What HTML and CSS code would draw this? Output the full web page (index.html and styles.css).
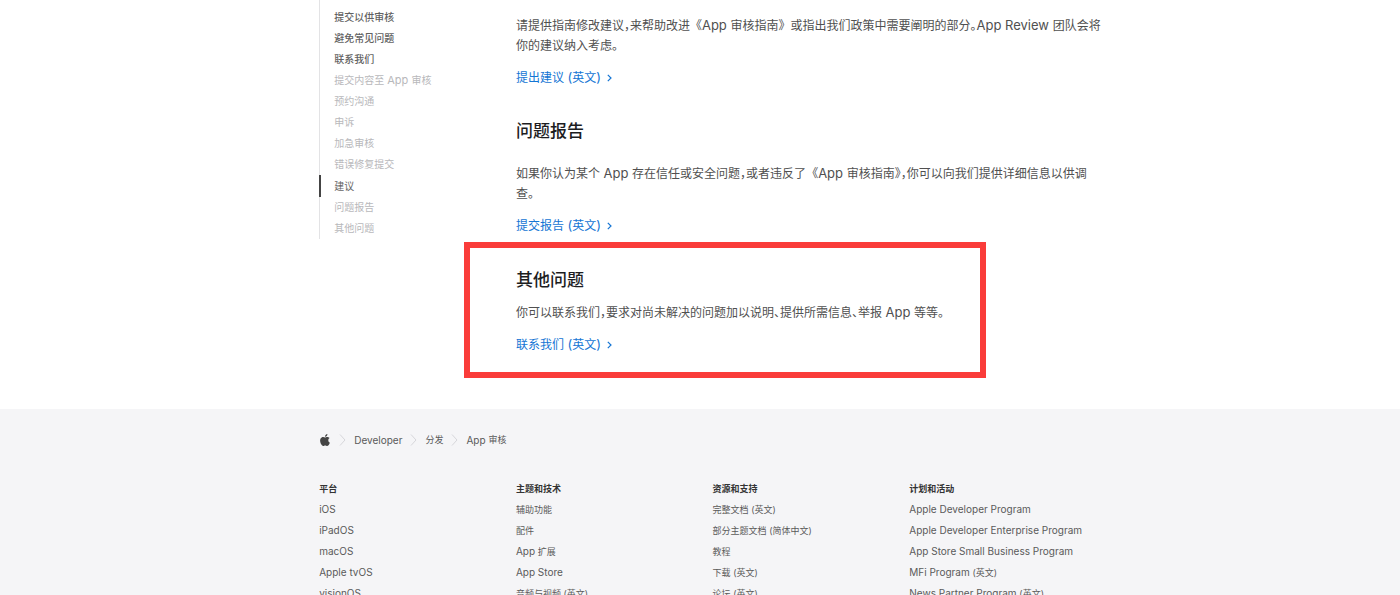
FILE: index.html
```html
<!DOCTYPE html>
<html lang="zh-CN">
<head>
    <meta charset="UTF-8">
    <meta name="viewport" content="width=device-width, initial-scale=1.0">
    <title>App 审核 - Apple Developer</title>
    <link rel="stylesheet" href="styles.css">
</head>
<body>
    <div class="page container">
        <nav class="side-nav" aria-label="本页内容">
            <ul>
                <li class="section"><a href="#submit">提交以供审核</a></li>
                <li class="section"><a href="#avoid">避免常见问题</a></li>
                <li class="section"><a href="#contact">联系我们</a></li>
                <li><a href="#content">提交内容至<span class="latin"> App </span>审核</a></li>
                <li><a href="#appointment">预约沟通</a></li>
                <li><a href="#appeal">申诉</a></li>
                <li><a href="#expedite">加急审核</a></li>
                <li><a href="#bugfix">错误修复提交</a></li>
                <li class="active"><a href="#suggest">建议</a></li>
                <li><a href="#report">问题报告</a></li>
                <li><a href="#other">其他问题</a></li>
            </ul>
        </nav>
        <main class="content">
            <section id="suggest">
                <p>请提供指南修改建议，来帮助改进<span class="bracket">《</span><span class="latin">App </span>审核指南<span class="bracket">》</span>或指出我们政策中需要阐明的部分。<span class="latin">App Review </span>团队会将<br>你的建议纳入考虑。</p>
                <a class="more" href="#suggest"><span>提出建议<span class="latin"> (</span>英文<span class="latin">)</span></span><svg viewBox="0 0 5 8"><path d="M0.8 0.8 4 4 0.8 7.2"/></svg></a>
            </section>
            <section id="report">
                <h2>问题报告</h2>
                <p>如果你认为某个<span class="latin"> App </span>存在信任或安全问题，或者违反了<span class="bracket">《</span><span class="latin">App </span>审核指南<span class="bracket">》</span>，你可以向我们提供详细信息以供调<br>查。</p>
                <a class="more" href="#report"><span>提交报告<span class="latin"> (</span>英文<span class="latin">)</span></span><svg viewBox="0 0 5 8"><path d="M0.8 0.8 4 4 0.8 7.2"/></svg></a>
            </section>
            <section id="other" class="highlight">
                <h2>其他问题</h2>
                <p>你可以联系我们，要求对尚未解决的问题加以说明、提供所需信息、举报<span class="latin"> App </span>等等。</p>
                <a class="more" href="#other"><span>联系我们<span class="latin"> (</span>英文<span class="latin">)</span></span><svg viewBox="0 0 5 8"><path d="M0.8 0.8 4 4 0.8 7.2"/></svg></a>
            </section>
        </main>
    </div>
    <footer class="footer">
        <div class="container">
            <nav class="breadcrumbs" aria-label="路径">
                <a href="#apple" aria-label="Apple"><svg class="apple" viewBox="0 0 24 24"><path d="M12.15 6.9c-.95 0-2.42-1.08-3.96-1.04-2.04.03-3.91 1.18-4.96 3.01-2.12 3.68-.55 9.1 1.51 12.09 1.01 1.45 2.21 3.09 3.79 3.04 1.52-.07 2.09-.99 3.93-.99 1.83 0 2.35.99 3.96.95 1.64-.03 2.68-1.48 3.68-2.95 1.16-1.69 1.64-3.33 1.66-3.42-.04-.01-3.18-1.22-3.22-4.86-.03-3.04 2.48-4.49 2.6-4.56-1.43-2.09-3.62-2.32-4.39-2.38-2-.16-3.68 1.09-4.6 1.09zM15.53 3.83c.84-1.01 1.4-2.43 1.25-3.83-1.21.05-2.66.8-3.53 1.82-.78.9-1.45 2.34-1.27 3.71 1.34.1 2.71-.69 3.55-1.7z"/></svg></a>
                <svg class="divider" viewBox="0 0 7 12"><path d="M1 0.5 6 6 1 11.5"/></svg>
                <a href="#developer">Developer</a>
                <svg class="divider" viewBox="0 0 7 12"><path d="M1 0.5 6 6 1 11.5"/></svg>
                <a href="#distribute"><span class="cjk">分发</span></a>
                <svg class="divider" viewBox="0 0 7 12"><path d="M1 0.5 6 6 1 11.5"/></svg>
                <a href="#review">App <span class="cjk">审核</span></a>
            </nav>
            <div class="directory">
                <div>
                    <h3>平台</h3>
                    <ul>
                        <li><a href="#ios">iOS</a></li>
                        <li><a href="#ipados">iPadOS</a></li>
                        <li><a href="#macos">macOS</a></li>
                        <li><a href="#tvos">Apple tvOS</a></li>
                        <li><a href="#visionos">visionOS</a></li>
                    </ul>
                </div>
                <div>
                    <h3>主题和技术</h3>
                    <ul>
                        <li><a href="#accessibility"><span class="cjk">辅助功能</span></a></li>
                        <li><a href="#accessories"><span class="cjk">配件</span></a></li>
                        <li><a href="#extensions">App <span class="cjk">扩展</span></a></li>
                        <li><a href="#appstore">App Store</a></li>
                        <li><a href="#audio"><span class="cjk">音频与视频 (英文)</span></a></li>
                    </ul>
                </div>
                <div>
                    <h3>资源和支持</h3>
                    <ul>
                        <li><a href="#docs"><span class="cjk">完整文档 (英文)</span></a></li>
                        <li><a href="#topics"><span class="cjk">部分主题文档 (简体中文)</span></a></li>
                        <li><a href="#tutorials"><span class="cjk">教程</span></a></li>
                        <li><a href="#downloads"><span class="cjk">下载 (英文)</span></a></li>
                        <li><a href="#forums"><span class="cjk">论坛 (英文)</span></a></li>
                    </ul>
                </div>
                <div>
                    <h3>计划和活动</h3>
                    <ul>
                        <li><a href="#adp">Apple Developer Program</a></li>
                        <li><a href="#adep">Apple Developer Enterprise Program</a></li>
                        <li><a href="#small">App Store Small Business Program</a></li>
                        <li><a href="#mfi">MFi Program <span class="cjk">(英文)</span></a></li>
                        <li><a href="#news">News Partner Program <span class="cjk">(英文)</span></a></li>
                    </ul>
                </div>
            </div>
        </div>
    </footer>
</body>
</html>
```
FILE: styles.css
```css
* {
    box-sizing: border-box;
    margin: 0;
    padding: 0;
}

body {
    font-family: Inter, "Noto Sans CJK SC", sans-serif;
    font-size: 12px;
    line-height: 20px;
    color: #505050;
    background-color: #fff;
}

a {
    color: inherit;
    text-decoration: none;
}

a:hover {
    text-decoration: underline;
}

ul {
    list-style: none;
}

.container {
    padding: 0 21% 0 22.8%;
}

.page {
    display: grid;
    grid-template-columns: 1fr 3fr;
    align-items: start;
    padding-bottom: 31px;
}

/* Side navigation */
.side-nav {
    font-size: 10px;
    line-height: 21px;
    color: #b8b8bb;
}

.side-nav ul {
    padding-top: 7px;
    background: linear-gradient(#e3e3e5, #e3e3e5) left / 1px 100% no-repeat;
}

.side-nav li {
    padding-left: 15px;
}

.side-nav .section {
    color: #626262;
    font-weight: 500;
}

.side-nav .active {
    padding-top: 1px;
    padding-left: 13px;
    border-left: 2px solid #444;
    color: #666;
}

.side-nav .latin {
    font-size: 11px;
}

/* Main content */
.content {
    padding-top: 16px;
    font-feature-settings: "halt";
}

.content .latin {
    font-size: 13px;
    line-height: 1;
}

.bracket {
    font-feature-settings: normal;
}

.content h2 {
    margin: 31px 0 21px;
    font-size: 17px;
    font-weight: 500;
    line-height: 24px;
    color: #1d1d1f;
}

.content p {
    margin-bottom: 12px;
}

.more {
    display: flex;
    align-items: center;
    gap: 6px;
    color: #1475d4;
}

.more svg {
    width: 5px;
    height: 8px;
    fill: none;
    stroke: currentColor;
    stroke-width: 1.2;
}

.content .highlight {
    width: fit-content;
    margin: 6px 0 0 -52px;
    padding: 20px 36px 17px 46px;
    border: 6px solid #fa3c3a;
}

.content .highlight h2 {
    margin: 0 0 11px;
}

/* Footer */
.footer {
    padding-top: 21px;
    background-color: #f5f5f7;
    font-size: 10px;
    color: #5a5a5a;
}

.breadcrumbs {
    display: flex;
    align-items: center;
    gap: 8px;
    margin-bottom: 29px;
}

.breadcrumbs a {
    display: flex;
    align-items: center;
    gap: 3px;
}

.apple {
    width: 12px;
    height: 12px;
    fill: #444;
}

.divider {
    width: 7px;
    height: 12px;
    fill: none;
    stroke: #d6d6da;
}

.cjk {
    font-size: 9px;
}

.directory {
    display: grid;
    grid-template-columns: repeat(4, 1fr);
}

.directory h3 {
    font-size: 9px;
    font-weight: 600;
    line-height: 20px;
    color: #333;
}

.directory li {
    line-height: 21px;
    white-space: nowrap;
}
```
